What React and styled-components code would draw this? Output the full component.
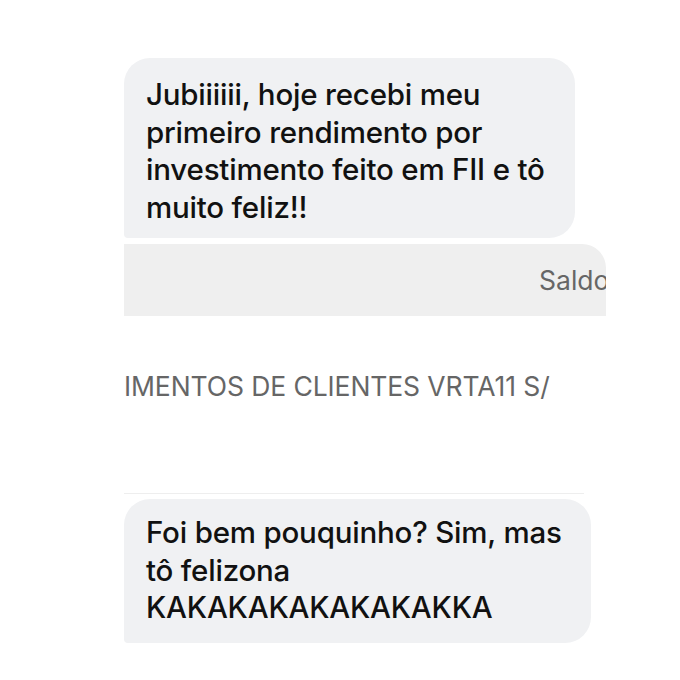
import React from "react"
import styled, { createGlobalStyle } from "styled-components"

const Global = createGlobalStyle`
  html, body {
    margin: 0;
    padding: 0;
    background: #ffffff;
  }
`;

const Page = styled.main`
  width: 680px;
  height: 680px;
  box-sizing: border-box;
  padding: 58px 0 0 124px;
  display: flex;
  flex-direction: column;
  font-family: Inter, "Liberation Sans", sans-serif;
`;

const Bubble = styled.div`
  width: ${p => p.width}px;
  box-sizing: border-box;
  padding: ${p => p.pad};
  background: #f0f1f3;
  border-radius: 26px 26px 26px 4px;
  color: #111111;
  font-size: 29.5px;
  font-weight: 500;
  line-height: 37.5px;
  letter-spacing: -0.2px;
  white-space: nowrap;
`;

// cropped strip of a bank statement, its label runs past the right edge
const Band = styled.div`
  margin-top: 6px;
  width: 482px;
  height: 72px;
  background: #efefef;
  border-radius: 0 24px 0 0;
  overflow: hidden;
  display: flex;
  align-items: center;
  padding-left: 415px;
  box-sizing: border-box;
`;

const Grey = styled.span`
  color: #666666;
  font-size: 26.5px;
  font-weight: 400;
  white-space: nowrap;
  letter-spacing: ${p => p.spacing || "0px"};
`;

const Caption = styled.div`
  height: 140px;
  display: flex;
  align-items: center;
  box-sizing: border-box;
`;

const Divider = styled.hr`
  margin: 37px 0 5px;
  width: 460px;
  border: none;
  border-top: 1px solid #eeeeee;
`;

export default function App() {
  return (
    <>
      <Global />
      <Page>
        <Bubble width={451} pad="18px 20px 12px 22px">
          Jubiiiiii, hoje recebi meu<br />
          primeiro rendimento por<br />
          investimento feito em FII e tô<br />
          muito feliz!!
        </Bubble>
        <Band>
          <Grey>Saldo</Grey>
        </Band>
        <Caption>
          <Grey spacing="-0.1px">IMENTOS DE CLIENTES VRTA11 S/</Grey>
        </Caption>
        <Divider />
        <Bubble width={467} pad="15px 20px 16px 22px">
          Foi bem pouquinho? Sim, mas<br />
          tô felizona<br />
          KAKAKAKAKAKAKAKKA
        </Bubble>
      </Page>
    </>
  )
}
